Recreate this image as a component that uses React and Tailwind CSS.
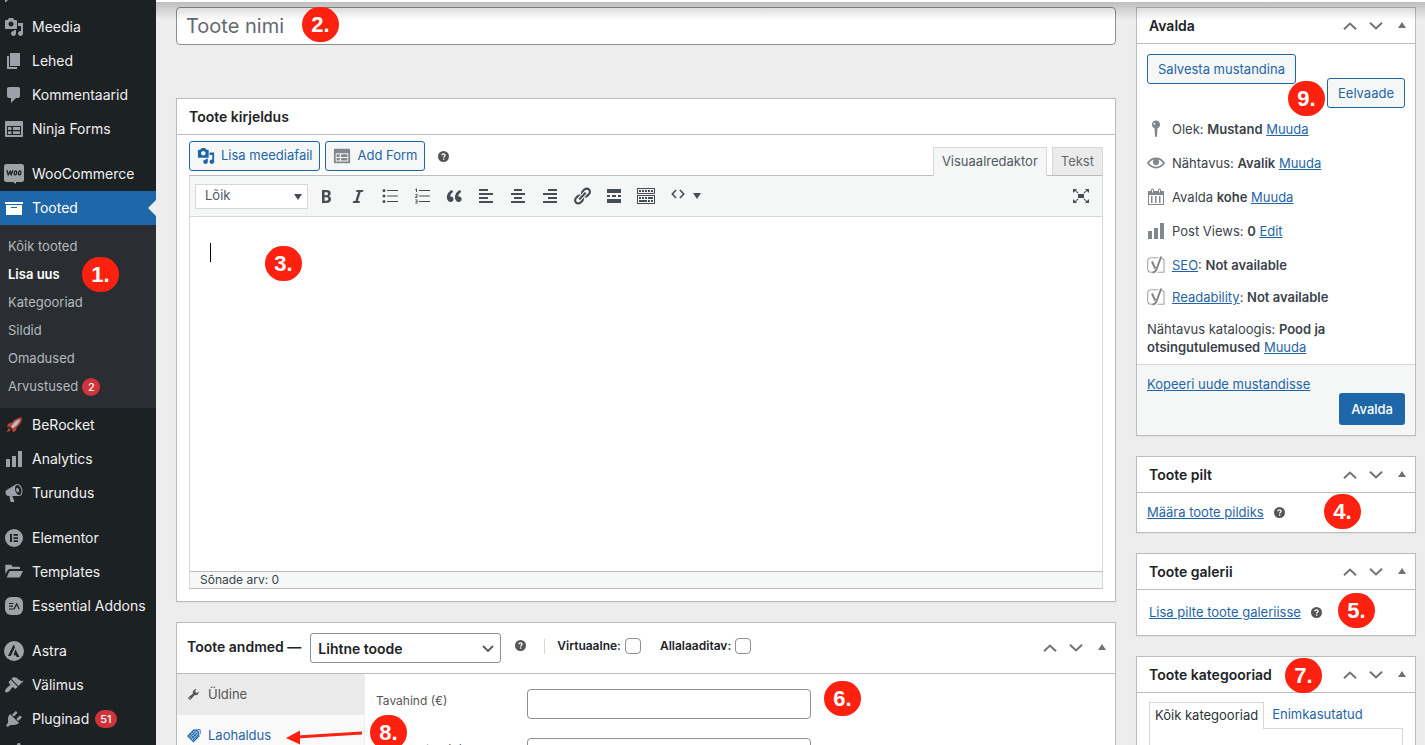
import React from "react";

const PATHS = {
  media:
    "M13 11V4c0-.55-.45-1-1-1h-1.67L9 1H5L3.67 3H2c-.55 0-1 .45-1 1v7c0 .55.45 1 1 1h10c.55 0 1-.45 1-1zM7 4.5c1.38 0 2.5 1.12 2.5 2.5S8.38 9.5 7 9.5 4.5 8.38 4.5 7 5.62 4.5 7 4.5zM14 6h5v10.5c0 1.38-1.12 2.5-2.5 2.5S14 17.88 14 16.5s1.12-2.5 2.5-2.5c.17 0 .34.02.5.05V9h-3V6zm-4 8.05V13h2v3.5c0 1.38-1.12 2.5-2.5 2.5S7 17.88 7 16.5 8.12 14 9.5 14c.17 0 .34.02.5.05z",
  page: "M6 15V2h10v13H6zm-1 1h8v2H3V5h2v11z",
  comments:
    "M5 2h9c1.1 0 2 .9 2 2v7c0 1.1-.9 2-2 2h-2l-5 5v-5H5c-1.1 0-2-.9-2-2V4c0-1.1.9-2 2-2z",
  form: "M2 2h16c.55 0 1 .45 1 1v14c0 .55-.45 1-1 1H2c-.55 0-1-.45-1-1V3c0-.55.45-1 1-1zm1 5v9h14V7H3zM4 8h3.500v3H4V8zm5 0h7v3H9V8zm-5 4.200h3.500V15H4v-2.800zm5 0h7V15H9v-2.800z",
  archive: "M19 4v2H1V4h18zM2 7h16v10H2V7zm11 3V9H7v1h6z",
  chart: "M18 18V2h-4v16h4zm-6 0V7H8v11h4zm-6 0v-8H2v8h4z",
  megaphone:
    "M18.15 5.94c.46 1.62.38 3.22-.02 4.48-.42 1.28-1.26 2.18-2.3 2.48-.16.06-.26.06-.4.06-.06.02-.12.02-.18.02-.06.02-.14.02-.22.02h-6.8l2.22 5.5c.02.14-.06.26-.14.34-.08.1-.24.16-.34.16H6.95c-.1 0-.26-.06-.34-.16-.08-.08-.16-.2-.14-.34l-1-5.5H4.25l-.02-.02c-.5.06-1.08-.18-1.54-.62s-.88-1.08-1.06-1.88c-.24-.8-.2-1.56-.02-2.2.18-.62.58-1.08 1.06-1.3l.02-.02 9-5.4c.1-.06.18-.1.24-.16.06-.04.14-.08.24-.12.16-.08.28-.12.5-.18 1.04-.3 2.24.1 3.22.98s1.84 2.24 2.26 3.86zm-2.58 5.98h-.02c.4-.1.74-.34 1.04-.7.58-.7.86-1.76.86-3.04 0-.64-.1-1.3-.28-1.98-.34-1.36-1.02-2.5-1.78-3.24s-1.68-1.1-2.46-.88c-.82.22-1.4.96-1.7 2-.32 1.04-.28 2.36.06 3.72.38 1.36 1 2.5 1.8 3.24.78.74 1.62 1.1 2.48.88zm-2.54-7.08c.22-.04.42-.02.62.04.38.16.76.48 1.02 1s.42 1.2.42 1.78c0 .3-.04.56-.12.8-.18.48-.44.84-.86.94-.34.1-.8-.06-1.14-.4s-.64-.86-.78-1.5c-.18-.62-.12-1.24.02-1.72s.48-.84.82-.94z",
  folder:
    "M1.500 15.500L1.200 4c0-.8.500-1.300 1.200-1.300h4.200c.9 0 1.200.6 1.400 1.300l.2.700h6.600c.8 0 1.200.5 1.200 1.200v1H6.300c-1.300 0-2.200.6-2.800 1.700L1.500 12v3.500zM2.600 15.500L5 10.200c.4-.9 1-1.300 2-1.300h12l-2.700 5.600c-.4.800-.9 1-1.700 1z",
  brush:
    "M14.48 11.06L7.41 3.99l1.5-1.5c.5-.56 2.3-.47 3.51.32 1.21.8 1.43 1.28 2.91 2.1 1.18.64 2.45 1.26 4.45.85zm-.71.71L6.7 4.7 4.93 6.47c-.39.39-.39 1.02 0 1.41l1.06 1.06c.39.39.39 1.03 0 1.42-.6.6-1.43 1.11-2.21 1.69-.35.26-.7.53-1.01.84C1.43 14.23.4 16.08 1.4 17.07c.99 1 2.84-.03 4.18-1.36.31-.31.58-.66.85-1.02.57-.78 1.08-1.61 1.69-2.21.39-.39 1.02-.39 1.41 0l1.06 1.06c.39.39 1.02.39 1.41 0z",
  plug: "M13.11 4.36L9.87 7.6 8 5.73l3.24-3.24c.35-.34 1.05-.2 1.56.32.52.51.66 1.21.31 1.55zm-8 1.77l.91-1.12 9.01 9.01-1.19.84c-.71.71-2.63 1.16-3.82 1.16H6.14L4.9 17.26c-.59.59-1.54.59-2.12 0-.59-.58-.59-1.53 0-2.12l1.24-1.24v-3.88c0-1.13.4-3.19 1.09-3.89zm7.26 3.97l3.24-3.24c.34-.35 1.04-.21 1.55.31.52.51.66 1.21.31 1.55l-3.24 3.25z",
  bold: "M6 4v13h4.54c1.37 0 2.46-.33 3.26-1 .8-.66 1.2-1.58 1.2-2.77 0-.84-.17-1.51-.51-2.01s-.9-.85-1.67-1.03v-.09c.57-.1 1.02-.4 1.36-.9s.51-1.13.51-1.91c0-1.14-.39-1.98-1.17-2.5C12.75 4.26 11.5 4 9.78 4H6zm2.57 5.15V6.26h1.36c.73 0 1.27.11 1.61.32.34.22.51.58.51 1.07 0 .54-.16.92-.47 1.15s-.82.35-1.51.35h-1.5zm0 2.19h1.6c1.44 0 2.16.53 2.16 1.61 0 .6-.17 1.05-.51 1.34s-.86.43-1.57.43H8.57v-3.38z",
  italic: "M14.78 6h-2.13l-2.8 9h2.12l-.62 2H4.6l.62-2h2.14l2.8-9H8.03l.62-2h6.75z",
  bullets:
    "M5.5 4.500a1.500 1.500 0 1 1-3 0 1.500 1.500 0 0 1 3 0zM7 4h11v1H7zM5.500 10a1.500 1.500 0 1 1-3 0 1.500 1.500 0 0 1 3 0zM7 9.500h11v1H7zM5.500 15.500a1.500 1.500 0 1 1-3 0 1.500 1.500 0 0 1 3 0zM7 15h11v1H7z",
  numbers:
    "M7 4h11v1H7zM7 9.500h11v1H7zM7 15h11v1H7zM4 2.500h1V6H4V3.700l-.7.200v-.7zM3.200 8h2.300v2l-1.300 1.200h1.300v.8H3.100v-1.100l1.500-1.300v-.8H3.200zM3.200 13.500h2.300v4H3.200v-.8h1.400v-.9H3.600v-.7h1v-.8H3.200z",
  quote:
    "M9.49 13.22c0-.74-.2-1.38-.61-1.9-.62-.78-1.83-.88-2.53-.72-.29-1.65 1.11-3.75 2.92-4.65L7.88 4c-2.73 1.3-5.42 4.28-4.96 8.05C3.21 14.43 4.59 16 6.54 16c.85 0 1.56-.25 2.12-.75s.83-1.18.83-2.03zm8.05 0c0-.74-.2-1.38-.61-1.9-.63-.78-1.83-.88-2.53-.72-.29-1.65 1.11-3.75 2.92-4.65L15.93 4c-2.73 1.3-5.41 4.28-4.95 8.05.29 2.38 1.66 3.95 3.61 3.95.85 0 1.56-.25 2.12-.75s.83-1.18.83-2.03z",
  left: "M12 5V3H3v2h9zm5 4V7H3v2h14zm-5 4v-2H3v2h9zm5 4v-2H3v2h14z",
  center: "M14 5V3H6v2h8zm3 4V7H3v2h14zm-3 4v-2H6v2h8zm3 4v-2H3v2h14z",
  right: "M17 5V3H8v2h9zm0 4V7H3v2h14zm0 4v-2H8v2h9zm0 4v-2H3v2h14z",
  link: "M17.74 2.76c1.68 1.69 1.68 4.41 0 6.1l-1.53 1.52c-1.12 1.12-2.7 1.47-4.14 1.09l2.62-2.61.76-.77.76-.76c.84-.84.84-2.2 0-3.04-.84-.85-2.2-.85-3.04 0l-.77.76-3.38 3.38c-.37-1.44-.02-3.02 1.1-4.14l1.52-1.53c1.69-1.68 4.42-1.68 6.1 0zM8.59 13.43l5.34-5.34c.42-.42.42-1.1 0-1.52-.44-.43-1.13-.39-1.53 0l-5.33 5.34c-.42.42-.42 1.1 0 1.52.44.43 1.13.39 1.52 0zm-.76 2.29l4.14-4.15c.38 1.44.03 3.02-1.09 4.14l-1.52 1.53c-1.69 1.68-4.41 1.68-6.1 0-1.68-1.68-1.68-4.42 0-6.1l1.53-1.52c1.12-1.12 2.7-1.47 4.14-1.1l-4.14 4.15c-.85.84-.85 2.2 0 3.05.84.84 2.2.84 3.04 0z",
  more: "M3 3h14v4H3zM3 9h3v2H3zM8 9h4v2H8zM14 9h3v2h-3zM3 13h14v4H3z",
  keyboard:
    "M1 2h18v6H1zm1 1v4h16V3zM3 4h2v2H3zm3 0h2v2H6zm3 0h2v2H9zm3 0h2v2h-2zm3 0h2v2h-2zM1 9h18v9H1zm1 1v7h16v-7zm1 1h2v2H3zm3 0h2v2H6zm3 0h2v2H9zm3 0h5v2h-5zM3 14h8v2H3zm9 0h2v2h-2zm3 0h2v2h-2z",
  expand:
    "M7 8h6v4H7zM2 3h4L4.800 4.200 7.500 6.700l-.8.800L4.200 4.900 3.500 5.600 2 7zM18 3h-4l1.200 1.200-2.700 2.500.8.800 2.500-2.600.7.700L18 7zM2 17h4l-1.200-1.200 2.700-2.500-.8-.8-2.500 2.600-.7-.7L2 13zM18 17h-4l1.200-1.200-2.700-2.500.8-.8 2.500 2.600.7-.7L18 13z",
  pin: "M10 1.500a4 4 0 0 1 1.500 7.700L11 17.500l-1 .5-1-.5-.5-8.300A4 4 0 0 1 10 1.500zm-1.300 2c-1 .5-1.300 1.300-1.100 2.300l1 .2c-.1-.9.200-1.500.9-1.900z",
  eye: "M18.730 9.460C16.930 6.400 13.600 4.510 10 4.510S3.070 6.400 1.270 9.460L1 10l.27.540c1.800 3.060 5.130 4.950 8.730 4.950s6.930-1.890 8.730-4.950L19 10zM10 13.690c-2.790 0-5.400-1.440-6.930-3.690C4.240 8.200 6.130 6.940 8.200 6.490c-.81.54-1.350 1.530-1.350 2.610 0 1.710 1.440 3.150 3.150 3.150s3.150-1.440 3.150-3.150c0-1.080-.54-2.070-1.350-2.610 2.070.45 3.960 1.710 5.130 3.510-1.530 2.250-4.140 3.690-6.930 3.690z",
  calendar:
    "M15 4h3v14H2V4h3V3c0-.83.67-1.500 1.500-1.500S8 2.170 8 3v1h4V3c0-.83.67-1.500 1.500-1.500S15 2.170 15 3v1zM6 3v2.500h1V3c0-.6-1-.6-1 0zm7 0v2.500h1V3c0-.6-1-.6-1 0zm4 14V8H3v9h14zM5 9h1.500v7H5zm4 0h1.500v7H9zm4 0h1.500v7H13z",
  wrench:
    "M16.68 9.77c-1.34 1.34-3.3 1.67-4.95.99l-5.41 6.52c-.99.99-2.59.99-3.58 0s-.99-2.59 0-3.57l6.52-5.42c-.68-1.65-.35-3.61.99-4.95 1.28-1.28 3.12-1.62 4.72-1.06l-2.89 2.89 2.82 2.82 2.86-2.87c.53 1.58.18 3.39-1.08 4.65zM3.81 16.21c.4.39 1.04.39 1.43 0 .4-.4.4-1.04 0-1.43-.39-.4-1.03-.4-1.43 0-.39.39-.39 1.03 0 1.43z",
};

function Icon({ name, className = "size-5" }) {
  return (
    <svg viewBox="0 0 20 20" className={`${className} shrink-0`} fill="currentColor" fillRule="evenodd" aria-hidden="true">
      <path d={PATHS[name]} />
    </svg>
  );
}

function WooIcon() {
  return (
    <svg viewBox="0 0 20 20" className="size-5 shrink-0" aria-hidden="true">
      <path d="M2.500 0h15A2.500 2.500 0 0 1 20 2.500v13a2.500 2.500 0 0 1-2.500 2.500H12v2l-3-2H2.500A2.500 2.500 0 0 1 0 15.500v-13A2.500 2.500 0 0 1 2.500 0z" fill="#a0a3a6" />
      <path d="M3 6.500l1.300 4.500 2-4 .9 4 1.600-4.500" fill="none" stroke="#1c2123" strokeWidth="1.300" strokeLinejoin="round" strokeLinecap="round" />
      <ellipse cx="11.500" cy="8.800" rx="1.200" ry="2" fill="none" stroke="#1c2123" strokeWidth="1.300" transform="rotate(12 11.500 8.800)" />
      <ellipse cx="15.700" cy="8.800" rx="1.200" ry="2" fill="none" stroke="#1c2123" strokeWidth="1.300" transform="rotate(12 15.700 8.800)" />
    </svg>
  );
}

function RocketIcon() {
  return (
    <svg viewBox="0 0 20 20" className="size-5 shrink-0" aria-hidden="true">
      <path d="M18 2.500c-4 0-7.500 1.500-10 5L4.500 8.500 2.800 11.500l3 .4 2.600 2.600.4 3 3-1.800 1-3.400c3.500-2.500 5.200-5.800 5.200-9.800z" fill="#b8433a" />
      <path d="M16 4.300c-2.500.5-5 2-6.800 4.500l-2 3 1.400 1.400 3-2c2.500-1.900 4-4 4.400-6.900z" fill="#b9bbbd" />
      <path d="M4.800 13L2.500 17.500 7 15.200l-1-1.200z" fill="#b8433a" />
    </svg>
  );
}

function ElementorIcon() {
  return (
    <svg viewBox="0 0 20 20" className="size-5 shrink-0" aria-hidden="true">
      <circle cx="10" cy="10" r="9" fill="#9ca1a7" />
      <path d="M6 6h2v8H6zM9.500 6H14v1.700H9.500zM9.500 9.200H14v1.700H9.500zM9.500 12.300H14V14H9.500z" fill="#1c2123" />
    </svg>
  );
}

function AddonsIcon() {
  return (
    <svg viewBox="0 0 20 20" className="size-5 shrink-0" aria-hidden="true">
      <rect x="1" y="1" width="18" height="18" rx="6" fill="#a0a3a6" />
      <path d="M5 7.500h4.500M5 10.200h4M5 13h4.500M10 13.300l2.700-5.500 2.500 5.500" fill="none" stroke="#1c2123" strokeWidth="1.200" />
    </svg>
  );
}

function AstraIcon() {
  return (
    <svg viewBox="0 0 20 20" className="size-5 shrink-0" aria-hidden="true">
      <circle cx="10" cy="10" r="10" fill="#a0a3a6" />
      <path d="M9.600 3.500L11 6.200 6.700 15H4zM11.400 8.200L15.500 16h-2.800l-.9-1.800H9.600z" fill="#1c2123" />
    </svg>
  );
}

function YoastIcon() {
  return (
    <svg viewBox="0 0 20 20" className="size-5 shrink-0" fill="none" aria-hidden="true">
      <path d="M12.500 2.700H5A3.300 3.300 0 0 0 1.700 6v8A3.300 3.300 0 0 0 5 17.300h3M15.700 3.200c1.500.3 2.300 1.400 2.300 2.800v11.300h-6.500" stroke="#a3a5a8" strokeWidth="1.100" />
      <path d="M6 6.500l3.200 7M15.200 1.500l-4.800 13c-.7 1.900-1.700 2.900-3.900 3" stroke="#828487" strokeWidth="2" />
    </svg>
  );
}

function TagIcon() {
  return (
    <svg viewBox="0 0 14 14" className="size-[14px] shrink-0" aria-hidden="true">
      <path d="M6.800.8l4.200 1.400 1 4.800L6.500 12.800.8 7z" fill="#7fb0da" stroke="#1f65a6" strokeWidth="1.100" />
      <path d="M3 5l5.500 5.500M5 3l5.500 5.500M4.500 9.500l5.500-5.500M3 8l5.500-5.500M6 11l5.500-5.500" stroke="#1f65a6" strokeWidth=".8" fill="none" />
      <path d="M9 .7h4.200V5" stroke="#1f65a6" strokeWidth=".9" fill="none" />
    </svg>
  );
}

function Help({ className = "" }) {
  return (
    <svg viewBox="0 0 12 12" className={`size-[11px] shrink-0 ${className}`} aria-hidden="true">
      <circle cx="6" cy="6" r="6" fill="#555" />
      <path d="M4.200 4.700c0-1 .8-1.600 1.800-1.600s1.800.6 1.800 1.500c0 1.200-1.600 1.200-1.600 2.500" stroke="#fff" strokeWidth="1.400" fill="none" />
      <rect x="5.400" y="8" width="1.500" height="1.500" fill="#fff" />
    </svg>
  );
}

function Marker({ children, className }) {
  return (
    <span
      className={`pointer-events-none absolute z-20 flex h-[35px] w-[37px] items-center justify-center rounded-full bg-[#ff210f] font-['Liberation_Sans',sans-serif] text-[22px] font-bold text-white ${className}`}
    >
      {children}
    </span>
  );
}

function MenuItem({ icon, label, active, count }) {
  return (
    <li>
      <a
        href="#"
        className={`relative flex h-[34px] items-center pl-1 text-[14px] ${active ? "bg-[#1e67a9] text-white" : "text-[#f0f0f1]"}`}
      >
        <span className={active ? "text-white" : "text-[#9ca1a7]"}>{typeof icon === "string" ? <Icon name={icon} /> : icon}</span>
        <span className="ml-2 pb-[2px] whitespace-nowrap">{label}</span>
        {count && (
          <span className="ml-[6px] flex h-[18px] items-center rounded-full bg-[#d0333a] px-[5px] text-[11px] font-medium text-white">{count}</span>
        )}
        {active && (
          <svg viewBox="0 0 8 16" className="absolute top-[9px] right-0 h-4 w-2" aria-hidden="true">
            <path d="M8 0v16L0 8z" fill="#ededed" />
          </svg>
        )}
      </a>
    </li>
  );
}

const SUBMENU = ["Kõik tooted", "Lisa uus", "Kategooriad", "Sildid", "Omadused", "Arvustused"];

function Sidebar() {
  return (
    <nav aria-label="Peamenüü" className="w-[156px] shrink-0 overflow-hidden bg-[#1c2123]">
      <div className="flex h-[10px] items-start pl-1 text-[#9ca1a7]">
        <svg viewBox="0 0 20 2" className="h-[2px] w-5" aria-hidden="true">
          <path d="M1 0h3L2 2H1z" fill="currentColor" />
        </svg>
      </div>
      <ul>
        <MenuItem icon="media" label="Meedia" />
        <MenuItem icon="page" label="Lehed" />
        <MenuItem icon="comments" label="Kommentaarid" />
        <MenuItem icon="form" label="Ninja Forms" />
      </ul>
      <ul className="mt-[11px]">
        <MenuItem icon={<WooIcon />} label="WooCommerce" />
        <MenuItem icon="archive" label="Tooted" active />
        <li className="relative bg-[#2a2e32] pt-2 pb-[7px]">
          <ul>
            {SUBMENU.map((s) => (
              <li key={s}>
                <a
                  href="#"
                  className={`flex h-7 items-center pl-2 text-[13px] ${s === "Lisa uus" ? "font-semibold text-white" : "text-[#b4b9be]"}`}
                >
                  {s}
                  {s === "Arvustused" && (
                    <span className="ml-1 flex size-[18px] items-center justify-center rounded-full bg-[#d0333a] text-[11px] font-medium text-white">2</span>
                  )}
                </a>
              </li>
            ))}
          </ul>
          <Marker className="top-8 left-[82px]">1.</Marker>
        </li>
        <MenuItem icon={<RocketIcon />} label="BeRocket" />
        <MenuItem icon="chart" label="Analytics" />
        <MenuItem icon="megaphone" label="Turundus" />
      </ul>
      <ul className="mt-[11px]">
        <MenuItem icon={<ElementorIcon />} label="Elementor" />
        <MenuItem icon="folder" label="Templates" />
        <MenuItem icon={<AddonsIcon />} label="Essential Addons" />
      </ul>
      <ul className="mt-[11px]">
        <MenuItem icon={<AstraIcon />} label="Astra" />
        <MenuItem icon="brush" label="Välimus" />
        <MenuItem icon="plug" label="Pluginad" count="51" />
      </ul>
      <div className="flex h-[34px] items-center pl-1 text-[#9ca1a7]">
        <svg viewBox="0 0 20 20" className="size-5" aria-hidden="true">
          <path d="M14 0h2l1 3-3 8H9l3-8zM3 20c0-6 3-9 7-9s7 3 7 9z" fill="currentColor" />
        </svg>
      </div>
    </nav>
  );
}

function HandleButtons() {
  return (
    <div className="flex text-[#6f7278]">
      <button type="button" aria-label="Liiguta üles" className="flex h-9 w-[26px] items-center justify-center">
        <svg viewBox="0 0 14 8" className="h-2 w-[14px]" fill="none" stroke="currentColor" strokeWidth="2">
          <path d="M1 7.200l6-5.600 6 5.600" />
        </svg>
      </button>
      <button type="button" aria-label="Liiguta alla" className="flex h-9 w-[26px] items-center justify-center">
        <svg viewBox="0 0 14 8" className="h-2 w-[14px]" fill="none" stroke="currentColor" strokeWidth="2">
          <path d="M1 .8l6 5.600L13 .8" />
        </svg>
      </button>
      <button type="button" aria-label="Ava või sulge paneel" className="flex h-9 w-[26px] items-center justify-center pb-[2px]">
        <svg viewBox="0 0 8 6" className="h-[6px] w-2" fill="currentColor">
          <path d="M4 0l4 6H0z" />
        </svg>
      </button>
    </div>
  );
}

function Panel({ title, children, handles = true, marker }) {
  return (
    <section className="relative border border-[#babcbf] bg-white shadow-[0_1px_1px_rgba(0,0,0,0.04)]">
      <div className="flex h-9 items-center justify-between border-b border-[#babcbf] pl-3">
        <h2 className="text-[14px] font-semibold text-[#1d2327]">{title}</h2>
        {handles && <HandleButtons />}
      </div>
      {children}
      {marker}
    </section>
  );
}

function OutlineButton({ children, padding = "px-[10px]", className = "" }) {
  return (
    <button
      type="button"
      className={`flex h-[30px] items-center justify-center rounded-[3px] border border-[#1f65a6] bg-[#f5f7f7] text-[13px] whitespace-nowrap text-[#1f65a6] ${padding} ${className}`}
    >
      {children}
    </button>
  );
}

function A({ children }) {
  return (
    <a href="#" className="text-[#1f65a6] underline">
      {children}
    </a>
  );
}

const TOOLS = [
  ["bold", "Rasvane"],
  ["italic", "Kaldkiri"],
  ["bullets", "Täpploend"],
  ["numbers", "Nummerdatud loend"],
  ["quote", "Tsitaat"],
  ["left", "Joonda vasakule"],
  ["center", "Joonda keskele"],
  ["right", "Joonda paremale"],
  ["link", "Lisa link"],
  ["more", "Loe edasi"],
  ["keyboard", "Tööriistariba"],
];

function Editor() {
  return (
    <div className="px-3 pt-[6px] pb-3">
      <div className="flex h-[34px] items-end justify-between">
        <div className="flex items-center gap-[5px] self-start">
          <OutlineButton padding="px-[7px]">
            <Icon name="media" className="mr-[6px] size-[18px]" />
            Lisa meediafail
          </OutlineButton>
          <OutlineButton padding="px-[7px]">
            <Icon name="form" className="mr-[6px] size-[18px] text-[#82878c]" />
            Add Form
          </OutlineButton>
          <Help className="ml-2" />
        </div>
        <div className="flex items-end gap-[5px] text-[13px]">
          <button type="button" className="relative z-10 -mb-px h-[29px] border border-b-0 border-[#d5d7d9] bg-[#f5f7f7] px-2 text-[#50575e]">
            Visuaalredaktor
          </button>
          <button type="button" className="h-7 border border-b-0 border-[#d5d7d9] bg-[#ebebeb] px-2 text-[#646970]">
            Tekst
          </button>
        </div>
      </div>
      <div className="relative border border-t-[#babcbf] border-r-[#d5d7d9] border-b-[#babcbf] border-l-[#d5d7d9]">
        <div className="flex h-[41px] items-center border-b border-[#d5d7d9] bg-[#f5f7f7] pr-[11px] pl-[5px] text-[#474d54]">
          <div className="relative mr-[2px] h-[25px] w-[113px]">
            <select aria-label="Lõigu stiil" className="size-full appearance-none border border-[#d5d7d9] bg-white pl-[9px] text-[13px] text-[#50575e]">
              <option>Lõik</option>
            </select>
            <svg viewBox="0 0 8 6" className="pointer-events-none absolute top-[10px] right-[6px] h-[6px] w-2" fill="#474d54">
              <path d="M0 0h8L4 6z" />
            </svg>
          </div>
          {TOOLS.map(([name, label]) => (
            <button key={name} type="button" aria-label={label} className="flex h-7 w-8 items-center justify-center">
              <Icon name={name} />
            </button>
          ))}
          <button type="button" aria-label="Lähtekood" className="flex h-7 items-center gap-2 pl-[9px]">
            <svg viewBox="0 0 14 10" className="mb-1 h-[10px] w-[14px]" fill="none" stroke="currentColor" strokeWidth="1.600">
              <path d="M5 1L1.300 5 5 9M9 1l3.700 4L9 9" />
            </svg>
            <svg viewBox="0 0 8 6" className="h-[6px] w-2" fill="currentColor">
              <path d="M0 0h8L4 6z" />
            </svg>
          </button>
          <button type="button" aria-label="Täisekraan" className="ml-auto">
            <Icon name="expand" />
          </button>
        </div>
        <textarea aria-label="Toote kirjeldus" className="block h-[354px] w-full resize-none bg-white p-5 outline-none" />
        <span className="absolute top-[67px] left-5 h-[19px] w-px bg-black" />
        <Marker className="top-[70px] left-[75px]">3.</Marker>
        <div className="h-[17px] border-t border-[#babcbf] bg-[#f5f7f7] pl-[10px] text-[12px] leading-4 text-[#3c434a]">Sõnade arv: 0</div>
      </div>
    </div>
  );
}

function ProductData() {
  const input = "h-[30px] w-[284px] rounded-[4px] border border-[#8c8f94] bg-white px-2 text-[14px]";
  return (
    <section className="relative border border-[#babcbf] bg-white">
      <div className="flex h-[51px] items-center border-b border-[#babcbf] pl-[10px] text-[#1d2327]">
        <h2 className="mb-1 text-[14px] font-semibold whitespace-nowrap">Toote andmed —</h2>
        <div className="relative ml-[9px] h-[30px] w-[191px]">
          <select aria-label="Toote tüüp" className="size-full appearance-none rounded-[3px] border border-[#8c8f94] bg-white pl-[7px] text-[14px] font-semibold">
            <option>Lihtne toode</option>
          </select>
          <svg viewBox="0 0 12 8" className="pointer-events-none absolute top-3 right-[7px] h-2 w-3" fill="none" stroke="#50575e" strokeWidth="1.800">
            <path d="M1 1l5 5 5-5" />
          </svg>
        </div>
        <Help className="mb-[5px] ml-[14px]" />
        <span className="mb-1 ml-[18px] h-[15px] w-px bg-[#d5d7d9]" />
        <label className="mb-1 ml-3 flex items-center gap-1 text-[12px] font-semibold">
          Virtuaalne:
          <input type="checkbox" className="size-4 appearance-none rounded-[4px] border border-[#8c8f94] bg-white" />
        </label>
        <label className="mb-1 ml-[19px] flex items-center gap-1 text-[12px] font-semibold">
          Allalaaditav:
          <input type="checkbox" className="size-4 appearance-none rounded-[4px] border border-[#8c8f94] bg-white" />
        </label>
        <div className="ml-auto">
          <HandleButtons />
        </div>
      </div>
      <div className="flex">
        <ul className="w-[188px] shrink-0 border-r border-[#eee] bg-[#fafafa] text-[13px]">
          <li>
            <a href="#" className="flex h-[41px] items-center bg-[#ebebeb] pl-[10px] text-[#555]">
              <Icon name="wrench" className="mr-2 size-[13px]" />
              Üldine
            </a>
          </li>
          <li>
            <a href="#" className="flex h-[41px] items-center pl-[10px] text-[#1f65a6]">
              <span className="mr-[7px]">
                <TagIcon />
              </span>
              Laohaldus
            </a>
          </li>
        </ul>
        <div className="flex flex-col gap-[19px] pt-[15px] pl-[11px] text-[12px] text-[#555]">
          <label className="flex items-center">
            <span className="mb-[6px] w-[151px]">Tavahind (€)</span>
            <input type="text" className={input} />
          </label>
          <label className="flex items-center">
            <span className="mb-[6px] w-[151px]">Soodushind (€)</span>
            <input type="text" className={input} />
          </label>
        </div>
      </div>
      <Marker className="top-[58px] left-[647px]">6.</Marker>
      <svg viewBox="0 0 78 16" className="pointer-events-none absolute top-[106px] left-[108px] h-4 w-[78px]" aria-hidden="true">
        <path d="M12 8L77 4" stroke="#ff210f" strokeWidth="3" />
        <path d="M1 9L15 1.500v14z" fill="#ff210f" />
      </svg>
      <Marker className="top-[92px] left-[193px]">8.</Marker>
    </section>
  );
}

function StatusRow({ icon, height = "h-[34px]", children }) {
  return (
    <div className={`flex items-center gap-[6px] ${height}`}>
      <span className="-ml-px text-[#82878c]">{typeof icon === "string" ? <Icon name={icon} /> : icon}</span>
      <span>{children}</span>
    </div>
  );
}

function PublishPanel() {
  return (
    <Panel title="Avalda" marker={<Marker className="top-[73px] left-[151px]">9.</Marker>}>
      <div className="px-[10px] pt-[10px] pb-2 text-[13px] leading-[18px] text-[#3c434a]">
        <div className="mb-1 flex justify-between">
          <OutlineButton>Salvesta mustandina</OutlineButton>
          <OutlineButton className="mt-6">Eelvaade</OutlineButton>
        </div>
        <StatusRow icon="pin">
          Olek: <b className="font-semibold">Mustand</b> <A>Muuda</A>
        </StatusRow>
        <StatusRow icon="eye">
          Nähtavus: <b className="font-semibold">Avalik</b> <A>Muuda</A>
        </StatusRow>
        <StatusRow icon="calendar">
          Avalda <b className="font-semibold">kohe</b> <A>Muuda</A>
        </StatusRow>
        <StatusRow icon="chart">
          Post Views: <b className="font-semibold">0</b> <A>Edit</A>
        </StatusRow>
        <div className="pt-px">
          <StatusRow icon={<YoastIcon />} height="h-8">
            <A>SEO</A>: <b className="font-semibold">Not available</b>
          </StatusRow>
          <StatusRow icon={<YoastIcon />} height="h-8">
            <A>Readability</A>: <b className="font-semibold">Not available</b>
          </StatusRow>
        </div>
        <p className="mt-[7px] max-w-[220px]">
          Nähtavus kataloogis: <b className="font-semibold">Pood ja otsingutulemused</b> <A>Muuda</A>
        </p>
      </div>
      <div className="border-t border-[#d5d7d9] bg-[#f5f7f7] p-[10px] text-[13px] leading-[18px]">
        <A>Kopeeri uude mustandisse</A>
        <button type="button" className="ml-auto block h-8 rounded-[3px] bg-[#1e67a9] px-3 font-medium text-white">
          Avalda
        </button>
      </div>
    </Panel>
  );
}

export default function App() {
  return (
    <div className="flex h-screen overflow-hidden bg-[#ededed] font-[Inter,sans-serif] text-[13px] text-[#3c434a]">
      <Sidebar />
      <main className="relative min-w-0 flex-1">
        <div className="flex items-start gap-5 pt-[7px] pr-[9px] pl-5">
          <div className="flex min-w-0 flex-1 flex-col">
            <div className="relative">
              <input
                type="text"
                aria-label="Toote nimi"
                placeholder="Toote nimi"
                className="block h-[38px] w-full rounded-[4px] border border-[#8c8f94] bg-white px-[9px] text-[20px] placeholder:text-[#646970]"
              />
              <Marker className="top-0 left-[126px]">2.</Marker>
            </div>
            <div className="mt-[53px]">
              <Panel title="Toote kirjeldus" handles={false}>
                <Editor />
              </Panel>
            </div>
            <div className="mt-5">
              <ProductData />
            </div>
          </div>
          <aside className="flex w-[280px] shrink-0 flex-col gap-5">
            <PublishPanel />
            <Panel title="Toote pilt" marker={<Marker className="top-[37px] left-[187px]">4.</Marker>}>
              <div className="flex items-center gap-[10px] px-[10px] pt-[10px] pb-[11px] leading-[18px]">
                <A>Määra toote pildiks</A>
                <Help />
              </div>
            </Panel>
            <Panel title="Toote galerii" marker={<Marker className="top-[39px] left-[201px]">5.</Marker>}>
              <div className="flex items-center gap-[10px] px-3 pt-[13px] pb-[14px] leading-[18px]">
                <A>Lisa pilte toote galeriisse</A>
                <Help />
              </div>
            </Panel>
            <Panel title="Toote kategooriad" marker={<Marker className="top-px left-[148px]">7.</Marker>}>
              <div className="px-3 pt-[9px] pb-3">
                <div className="flex">
                  <button type="button" className="relative z-10 -mb-px h-[27px] border border-b-0 border-[#d5d7d9] bg-white px-[5px] text-[#2c3338]">
                    Kõik kategooriad
                  </button>
                  <button type="button" className="px-2 text-[#1f65a6]">
                    Enimkasutatud
                  </button>
                </div>
                <div className="h-[200px] border border-[#d5d7d9]" />
              </div>
            </Panel>
          </aside>
        </div>
        <div className="pointer-events-none absolute inset-x-0 top-0 z-10 h-5 border-t-2 border-white bg-linear-to-b from-black/20 to-transparent bg-clip-padding" />
      </main>
    </div>
  );
}
